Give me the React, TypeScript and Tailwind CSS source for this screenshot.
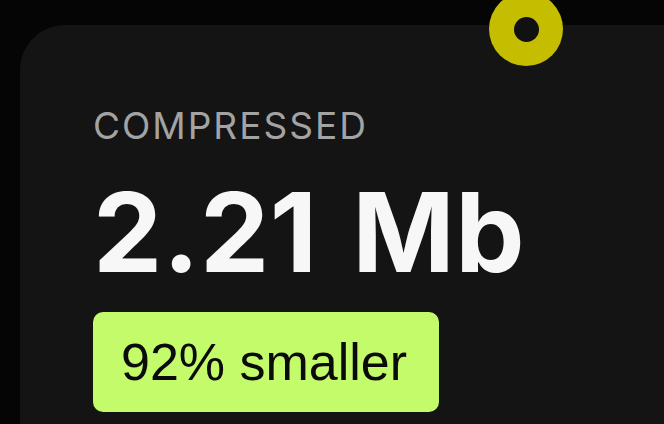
export default function App() {
  return (
    <div
      className="relative w-[664px] h-[424px] overflow-hidden bg-[#050505] pl-[20px] pt-[25px]"
      style={{ fontFamily: "Inter, 'Noto Sans', sans-serif" }}
    >
      {/* Card */}
      <div className="w-[700px] h-[460px] rounded-tl-[45px] bg-[#141414] pl-[73px] pt-[82px]">
        <div className="text-[37px] leading-none text-[#a3a3a3] tracking-[2px]">COMPRESSED</div>
        <div className="mt-[33px] text-[110px] leading-none font-bold text-[#f7f7f7] tracking-[0.5px] [word-spacing:8px]">
          2.21 Mb
        </div>
        <div className="mt-[25px] inline-flex h-[100px] items-center rounded-[10px] bg-[#c4fb6b] pl-[28px] pr-[32px]">
          <span
            className="text-[52px] leading-none text-[#0b0b0b]"
            style={{ fontFamily: "'Liberation Sans', Arial, sans-serif" }}
          >
            92% smaller
          </span>
        </div>
      </div>

      {/* Yellow ring marker */}
      <div className="absolute left-[489px] top-[-8px] flex h-[74px] w-[74px] items-center justify-center rounded-full bg-[#c4bd00]">
        <div className="h-[25px] w-[25px] rounded-full bg-[#111111]" />
      </div>
    </div>
  );
}
